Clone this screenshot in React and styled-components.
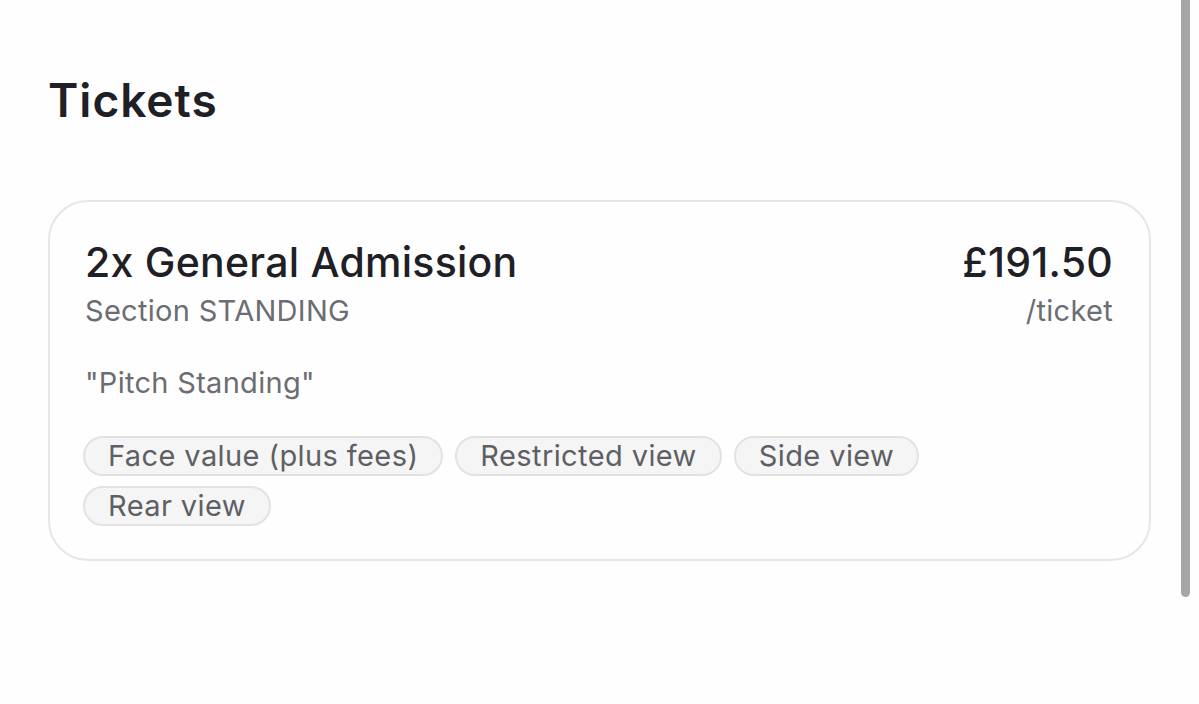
import React from 'react';
import styled, { createGlobalStyle } from 'styled-components';

const GlobalStyle = createGlobalStyle`
  html, body {
    margin: 0;
    padding: 0;
    background: #fefefe;
    font-family: Inter, "Noto Sans", "Liberation Sans", sans-serif;
    overflow: hidden;
  }
`;

const Page = styled.div`
  position: relative;
  height: 704px;
  padding: 73px 48px 0 48px;
  box-sizing: border-box;
`;

const Title = styled.h1`
  margin: 0 0 72px 0;
  font-size: 46px;
  line-height: 1.2;
  font-weight: 600;
  color: #1e2026;
  letter-spacing: 1px;
`;

const Card = styled.div`
  width: 1103px;
  box-sizing: border-box;
  border: 2px solid #e6e6e6;
  border-radius: 40px;
  background: #fefefe;
  padding: 36px 36px 33px 35px;
`;

const Header = styled.div`
  display: flex;
  justify-content: space-between;
  align-items: flex-start;
`;

const Column = styled.div`
  display: flex;
  flex-direction: column;
  align-items: ${(p) => (p.$right ? 'flex-end' : 'flex-start')};
  gap: 7px;
`;

const Heading = styled.div`
  font-size: 41px;
  line-height: 1.2;
  font-weight: 500;
  color: #1e2026;
  letter-spacing: 0.25px;
`;

const Muted = styled.div`
  font-size: 29px;
  line-height: 1.2;
  color: #6c6d72;
  letter-spacing: 0.3px;
`;

const Note = styled(Muted)`
  margin-top: 37px;
`;

const Tags = styled.div`
  display: flex;
  flex-wrap: wrap;
  gap: 10px 12px;
  margin-top: 35px;
  margin-left: -2px;
`;

const Tag = styled.span`
  display: inline-block;
  font-size: 29px;
  line-height: 36px;
  letter-spacing: 0.4px;
  padding: 0 23px;
  color: #5e5f64;
  background: #f5f5f5;
  border: 2px solid #e2e2e2;
  border-radius: 999px;
`;

const ScrollThumb = styled.div`
  position: absolute;
  top: 0;
  left: 1181px;
  width: 9px;
  height: 597px;
  background: #a6a6a6;
  border-radius: 0 0 5px 5px;
`;

const tags = ['Face value (plus fees)', 'Restricted view', 'Side view', 'Rear view'];

export default function App() {
  return (
    <>
      <GlobalStyle />
      <Page>
        <Title>Tickets</Title>
        <Card>
          <Header>
            <Column>
              <Heading>2x General Admission</Heading>
              <Muted>Section STANDING</Muted>
            </Column>
            <Column $right>
              <Heading>£191.50</Heading>
              <Muted>/ticket</Muted>
            </Column>
          </Header>
          <Note>"Pitch Standing"</Note>
          <Tags>
            {tags.map((t) => (
              <Tag key={t}>{t}</Tag>
            ))}
          </Tags>
        </Card>
        <ScrollThumb />
      </Page>
    </>
  );
}
